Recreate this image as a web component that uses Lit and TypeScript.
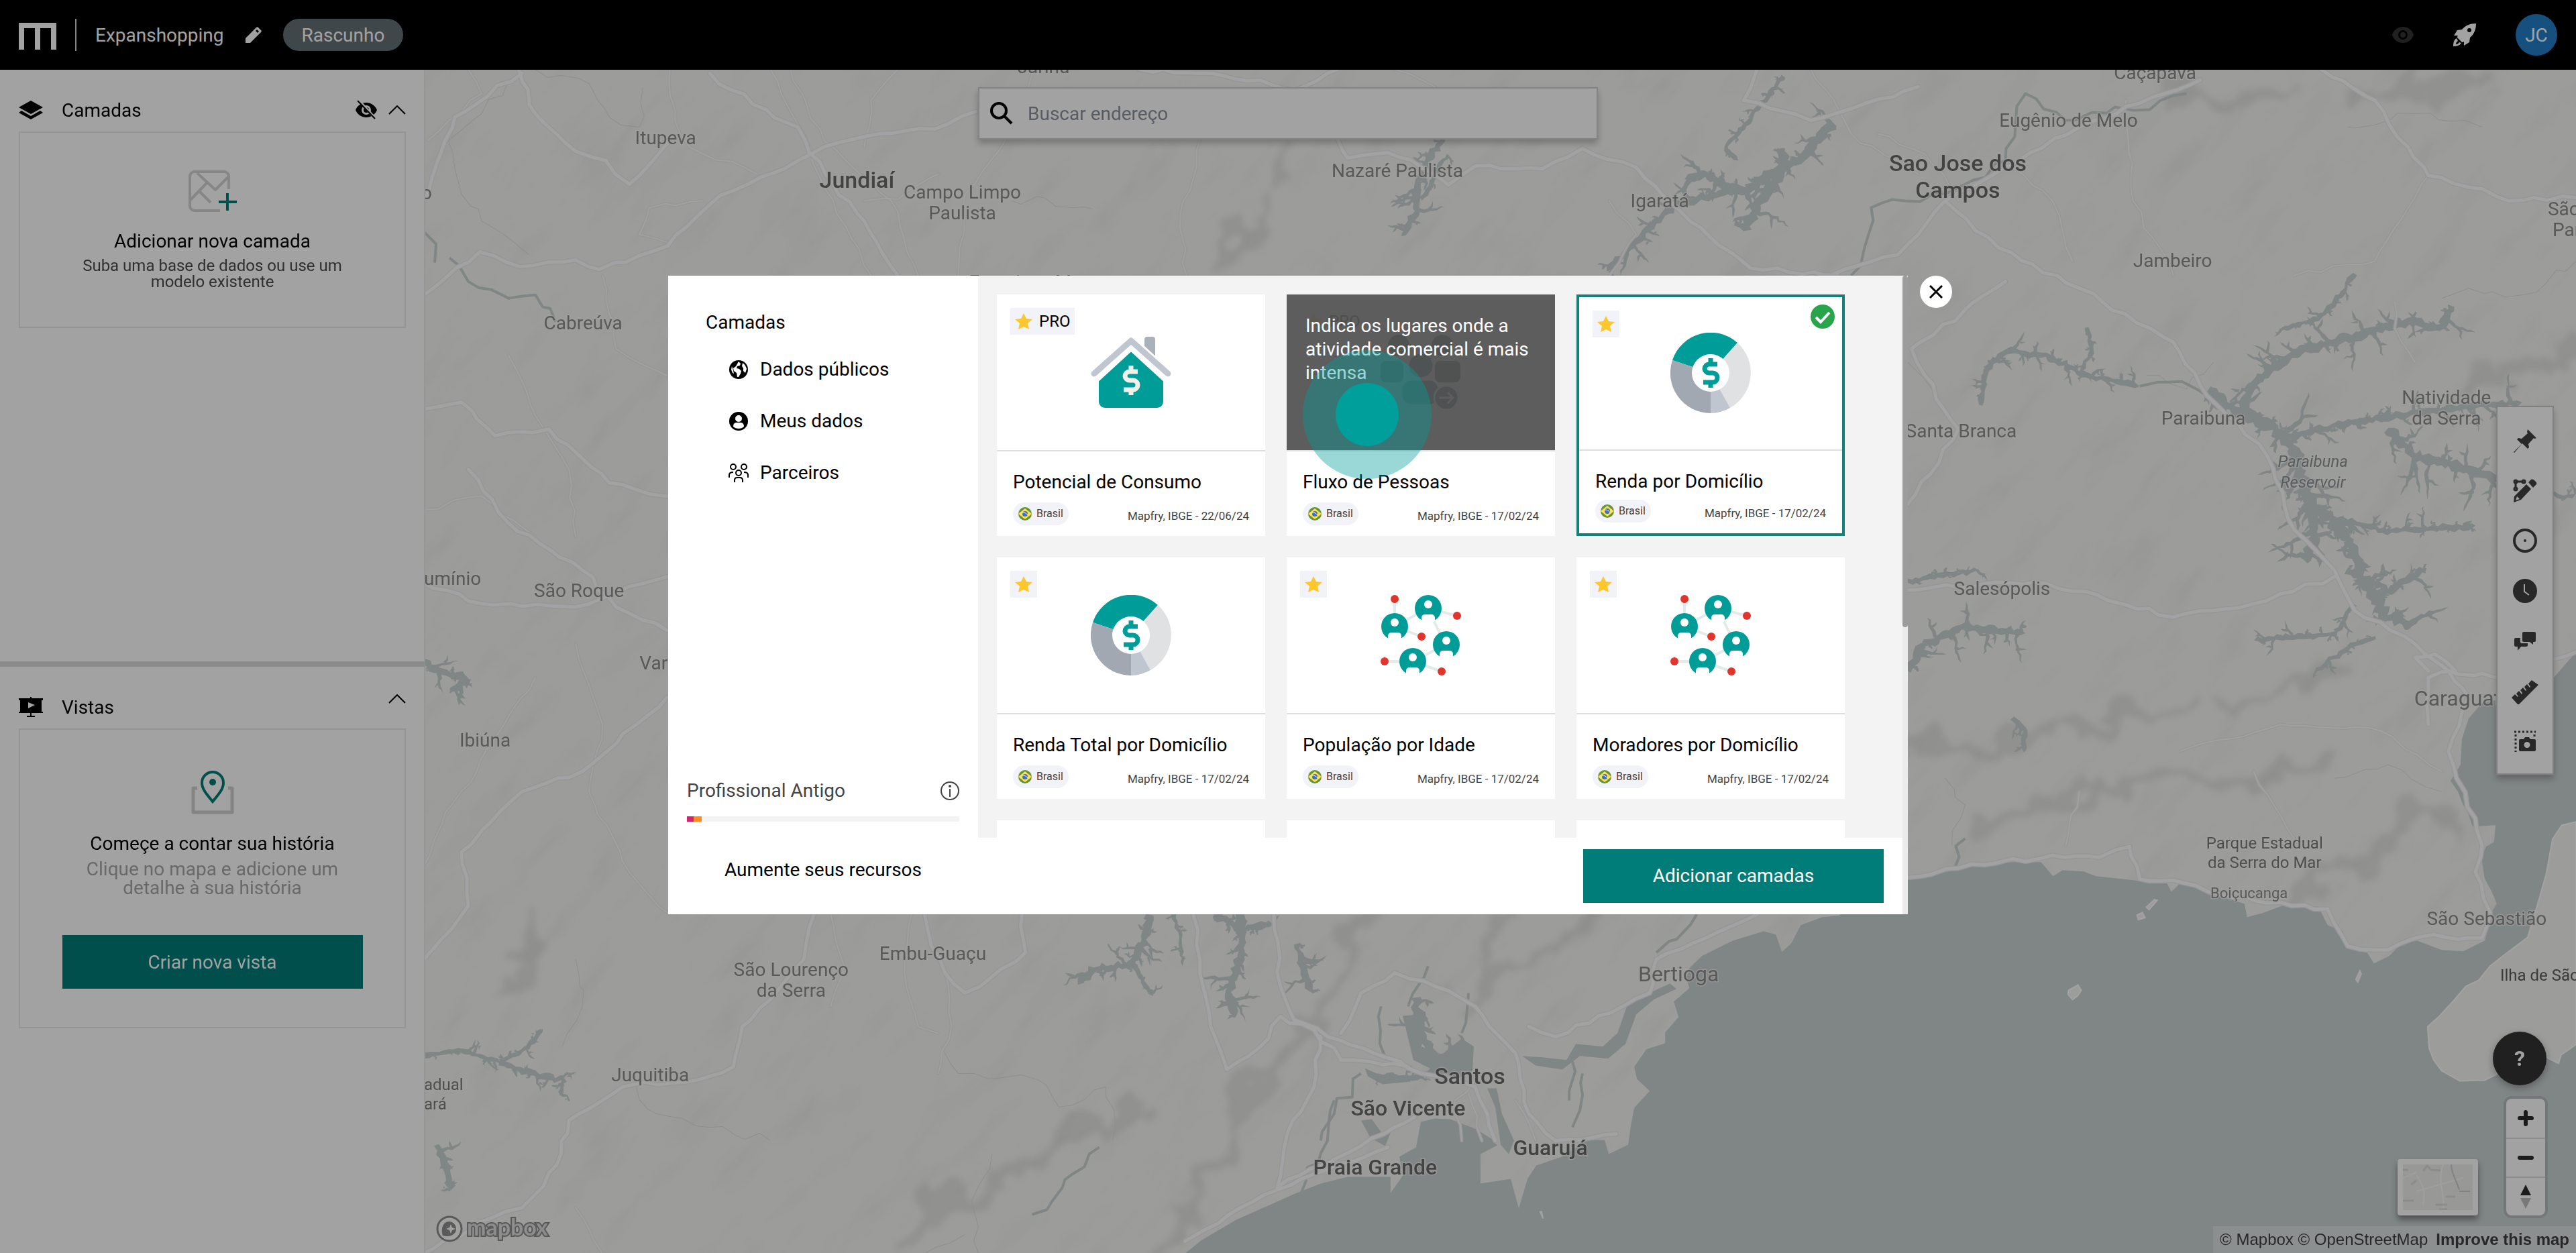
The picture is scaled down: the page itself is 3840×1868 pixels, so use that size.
import { LitElement, html, svg, css, nothing } from "lit";
import { customElement, property } from "lit/decorators.js";

type Pt = [number, number];

/* Deterministic generator, so that the shoreline detail is stable between renders. */
function rng(seed: number) {
  let s = seed * 9301 + 49297;
  return () => {
    s = (s * 1103515245 + 12345) & 0x7fffffff;
    return s / 0x7fffffff;
  };
}

/* Ragged ribbon around a spine, which narrows to a point at its far end. */
function ribbon(spine: Pt[], width: number, r: () => number, taper: boolean): string {
  const left: string[] = [];
  const right: string[] = [];
  const total = spine.length - 1;
  for (let i = 0; i < total; i++) {
    const [x1, y1] = spine[i];
    const [x2, y2] = spine[i + 1];
    const len = Math.hypot(x2 - x1, y2 - y1) || 1;
    const nx = -(y2 - y1) / len;
    const ny = (x2 - x1) / len;
    const steps = Math.max(2, Math.round(len / 6));
    for (let k = 0; k < steps; k++) {
      const t = k / steps;
      const fade = taper ? 1 - (i + t) / total : 1;
      const x = x1 + (x2 - x1) * t + (r() - 0.5) * 4;
      const y = y1 + (y2 - y1) * t + (r() - 0.5) * 4;
      const a = 1 + width * fade * (0.25 + r() * 0.75);
      const b = 1 + width * fade * (0.25 + r() * 0.75);
      left.push(`${(x + nx * a).toFixed(0)} ${(y + ny * a).toFixed(0)}`);
      right.unshift(`${(x - nx * b).toFixed(0)} ${(y - ny * b).toFixed(0)}`);
    }
  }
  const end = spine[total];
  return `M${left.join("L")}L${end[0]} ${end[1]}L${right.join("L")}Z`;
}

/* Flooded valley: a main body with tapering side arms of uneven length, each with small twigs. */
function reservoir(spine: Pt[], width: number, seed: number): string {
  const r = rng(seed);
  let d = ribbon(spine, width * 0.7, r, false);
  for (let i = 0; i < spine.length - 1; i++) {
    const [x1, y1] = spine[i];
    const [x2, y2] = spine[i + 1];
    const len = Math.hypot(x2 - x1, y2 - y1);
    const dir = Math.atan2(y2 - y1, x2 - x1);
    const arms = Math.round(len / 13);
    for (let k = 0; k < arms; k++) {
      const t = (k + r()) / arms;
      const side = r() > 0.5 ? 1 : -1;
      const angle = dir + side * (0.6 + r() * 1.2);
      const reach = width * (1 + Math.pow(r(), 2) * 3.2);
      const ox = x1 + (x2 - x1) * t;
      const oy = y1 + (y2 - y1) * t;
      const bend = angle + (r() - 0.5) * 1.2;
      const mx = ox + Math.cos(angle) * reach * 0.6;
      const my = oy + Math.sin(angle) * reach * 0.6;
      const ex = mx + Math.cos(bend) * reach * 0.6;
      const ey = my + Math.sin(bend) * reach * 0.6;
      d += ribbon([[ox, oy], [mx, my], [ex, ey]], width * 0.35, r, true);
      const twig = bend + (r() > 0.5 ? 1 : -1) * 1.1;
      d += ribbon([[mx, my], [mx + Math.cos(twig) * reach * 0.4, my + Math.sin(twig) * reach * 0.4]], width * 0.2, r, true);
    }
  }
  return d;
}

/* Winding line through the given points. */
function winding(points: Pt[], jitter: number, seed: number): string {
  const r = rng(seed);
  let d = `M${points[0][0]} ${points[0][1]}`;
  for (let i = 0; i < points.length - 1; i++) {
    const [x1, y1] = points[i];
    const [x2, y2] = points[i + 1];
    const steps = Math.max(1, Math.round(Math.hypot(x2 - x1, y2 - y1) / 20));
    for (let k = 1; k <= steps; k++) {
      const t = k / steps;
      const j = k === steps ? 0 : jitter;
      d += `L${(x1 + (x2 - x1) * t + (r() - 0.5) * j).toFixed(0)} ${(y1 + (y2 - y1) * t + (r() - 0.5) * j).toFixed(0)}`;
    }
  }
  return d;
}

const RESERVOIRS: [Pt[], number][] = [
  [[[2660, 112], [2640, 140], [2598, 191], [2571, 222], [2592, 240]], 5],
  [[[2735, 184], [2690, 232], [2640, 262], [2600, 285], [2540, 262], [2512, 268]], 12],
  [[[2600, 285], [2560, 292], [2500, 305], [2450, 350], [2396, 405]], 8],
  [[[2660, 225], [2650, 265], [2620, 305], [2600, 345]], 13],
  [[[2152, 207], [2130, 240], [2112, 283], [2112, 317], [2090, 353]], 9],
  [[[2160, 230], [2140, 262], [2120, 300]], 5],
  [[[3510, 408], [3490, 440], [3455, 475], [3400, 490]], 6],
  [[[3655, 455], [3640, 490], [3590, 480], [3520, 500], [3430, 522], [3360, 570], [3340, 620]], 11],
  [[[3290, 582], [3330, 610], [3390, 640], [3420, 670], [3440, 740], [3450, 790], [3440, 840]], 16],
  [[[3400, 655], [3460, 640], [3560, 622], [3680, 606], [3760, 600]], 9],
  [[[3440, 740], [3500, 800], [3520, 860], [3560, 920], [3600, 930]], 16],
  [[[3560, 640], [3600, 680], [3680, 700], [3730, 716]], 13],
  [[[3470, 770], [3560, 792], [3690, 784]], 7],
  [[[3500, 850], [3560, 880], [3616, 850]], 9],
  [[[3510, 900], [3480, 945], [3360, 955]], 6],
  [[[3540, 950], [3500, 966], [3450, 1002]], 5],
  [[[3790, 730], [3820, 742], [3840, 736]], 5],
  [[[2952, 604], [2962, 550], [2990, 522], [3050, 530], [3110, 560], [3190, 576]], 7],
  [[[3112, 488], [3120, 525], [3100, 556]], 5],
  [[[2844, 1000], [2866, 962], [2930, 934], [3020, 944]], 10],
  [[[2844, 866], [2890, 858], [2950, 850]], 6],
  [[[3000, 1070], [3020, 1090], [3018, 1122]], 6],
  [[[1717, 1363], [1704, 1407], [1685, 1438], [1628, 1446], [1608, 1468]], 10],
  [[[1700, 1405], [1690, 1440], [1720, 1485]], 6],
  [[[1750, 1363], [1762, 1400], [1764, 1440]], 4],
  [[[1851, 1363], [1851, 1424], [1832, 1481], [1844, 1515]], 12],
  [[[1810, 1363], [1850, 1385], [1900, 1378]], 8],
  [[[1934, 1407], [1946, 1451], [1959, 1481]], 9],
  [[[634, 1574], [690, 1566], [747, 1584], [790, 1560], [811, 1534]], 5],
  [[[747, 1584], [800, 1602], [843, 1610], [838, 1634]], 7],
  [[[652, 1707], [668, 1740], [674, 1774]], 8],
  [[[634, 988], [655, 1000], [700, 1012], [672, 1034]], 9],
  [[[2040, 1600], [2100, 1608], [2160, 1590]], 6],
  [[[2112, 1488], [2118, 1540], [2140, 1580], [2190, 1560]], 12],
];

const SEA =
  "M2844 1311L2904 1299L2951 1289L3000 1285L3043 1285L3061 1306L3075 1297L3107 1299L3125 1306L3190 1313L3231 1317L3237 1329L3249 1318L3282 1324L3323 1340L3346 1347L3350 1367L3373 1361L3405 1349L3456 1351L3470 1379L3493 1388L3497 1413L3529 1420L3539 1436L3562 1425L3578 1408L3603 1402L3640 1416L3672 1418L3704 1402L3709 1384L3714 1360L3722 1347L3714 1328L3704 1310L3699 1278L3706 1262L3718 1255L3720 1230L3686 1232L3680 1214L3672 1200L3664 1180L3653 1164L3668 1140L3670 1102L3680 1071L3700 1048L3740 1040L3807 1010L3840 972V1868H1768L1793 1848L1844 1818L1934 1778L1970 1764L2010 1754L2074 1754V1778L2093 1751L2087 1724L2112 1710L2119 1672L2140 1667L2163 1668L2202 1683L2224 1697L2233 1707L2208 1720V1764L2253 1757L2265 1801L2278 1757L2291 1737L2329 1724L2367 1699L2393 1699L2399 1720L2428 1706L2432 1677L2437 1651L2460 1626L2441 1608L2437 1590L2455 1564L2483 1555V1539L2503 1516L2496 1493L2519 1473L2515 1457L2519 1443L2538 1425L2584 1402L2630 1388L2648 1393L2657 1419L2671 1406L2685 1379L2717 1367L2741 1365Z";

const ISLANDS = [
  "M3840 1225L3819 1230L3805 1251L3796 1301L3782 1351L3768 1397L3731 1425L3712 1440L3695 1461L3676 1470L3658 1491L3635 1516L3619 1530L3621 1562L3628 1580L3640 1596L3667 1611L3704 1610L3722 1601L3760 1590L3796 1576L3814 1585L3818 1572L3840 1557Z",
  "M3084 1476L3098 1468L3103 1476L3098 1484L3090 1490L3083 1482Z",
  "M3186 1364L3194 1360L3198 1368L3188 1371Z",
  "M3200 1352L3212 1341L3216 1342L3204 1356Z",
  "M3512 1460L3518 1447L3520 1452L3515 1464Z",
  "M2297 1806L2301 1816L2299 1806Z",
];

/* Estuary channels round Santos, Guarujá and Bertioga. */
const CHANNELS = [
  "M2092 1514L2124 1512L2120 1560L2150 1572L2180 1548L2198 1560L2196 1596L2176 1606L2140 1596L2108 1580Z",
  "M2036 1592L2062 1604L2100 1602L2104 1612L2062 1616L2040 1604Z",
  "M2232 1622L2240 1660L2258 1700L2250 1720L2238 1706L2230 1650L2218 1622Z",
  "M2030 1670L2046 1668L2062 1690L2074 1688L2066 1708L2044 1696Z",
  "M2270 1574L2300 1576L2336 1580L2350 1556L2390 1560L2412 1540L2426 1500L2460 1480L2490 1466L2500 1474L2466 1490L2440 1512L2424 1556L2398 1578L2356 1574L2330 1594L2290 1588Z",
];

const ROADS_MAIN: Pt[][] = [
  [[634, 440], [717, 376], [777, 398], [860, 388], [895, 402], [997, 367], [1058, 307], [1099, 283], [1191, 240], [1252, 213], [1313, 200], [1395, 193], [1456, 167]],
  [[634, 300], [680, 175], [780, 110]],
  [[1060, 110], [1124, 156], [1191, 190], [1232, 260], [1290, 330], [1340, 411]],
  [[775, 104], [800, 170], [860, 226], [905, 240], [940, 275], [975, 240], [1000, 210]],
  [[1700, 104], [1790, 110], [1880, 120], [1930, 135], [1995, 104]],
  [[1995, 207], [2010, 236], [2070, 228], [2120, 250], [2160, 276], [2200, 248], [2300, 252], [2360, 222], [2440, 250], [2520, 330], [2610, 400], [2740, 411]],
  [[3460, 104], [3540, 150], [3590, 220], [3620, 262], [3700, 282], [3740, 300], [3840, 295]],
  [[3280, 120], [3100, 190], [2990, 250], [2900, 300], [2830, 380], [2730, 411]],
  [[2900, 300], [2980, 370], [3100, 430], [3240, 510], [3290, 590], [3380, 680], [3420, 790], [3480, 850], [3510, 910], [3600, 960], [3650, 1000], [3680, 1040], [3650, 1120], [3662, 1160], [3690, 1220], [3700, 1260], [3690, 1300], [3712, 1360], [3700, 1398], [3610, 1396], [3560, 1416], [3500, 1410], [3470, 1355], [3400, 1345], [3330, 1338], [3240, 1312], [3190, 1310], [3175, 1262], [3130, 1278], [3060, 1275], [3040, 1280], [2940, 1288], [2844, 1308]],
  [[3650, 1000], [3720, 1010], [3840, 972]],
  [[2620, 104], [2600, 150], [2700, 180], [2860, 130]],
  [[634, 1868], [735, 1815], [780, 1800], [800, 1780], [838, 1720], [850, 1670], [930, 1620], [1040, 1610], [1095, 1590], [1108, 1530], [1150, 1490], [1200, 1430], [1215, 1363]],
  [[1380, 1363], [1390, 1410], [1410, 1450], [1440, 1480], [1480, 1456], [1530, 1420], [1525, 1363]],
  [[1780, 1363], [1790, 1430], [1806, 1530], [1830, 1594], [1880, 1560], [1910, 1515], [1960, 1535], [2000, 1580], [2100, 1590]],
  [[1900, 1363], [1910, 1470], [1930, 1520], [1980, 1545], [2050, 1570], [2120, 1600], [2200, 1620], [2230, 1700]],
  [[2000, 1540], [2030, 1480], [2080, 1450], [2140, 1470], [2200, 1500], [2260, 1570], [2280, 1660], [2320, 1700], [2410, 1690]],
  [[2280, 1530], [2320, 1545], [2370, 1525], [2420, 1500], [2460, 1480], [2470, 1430], [2560, 1390], [2620, 1363]],
  [[1970, 1545], [1960, 1620], [1920, 1690], [1905, 1770], [2080, 1680], [2110, 1665]],
  [[1768, 1850], [1850, 1800], [1960, 1750], [2070, 1710]],
  [[2844, 752], [2920, 640], [2870, 560], [2850, 520], [2990, 420]],
  [[2844, 880], [2960, 870], [3050, 870], [3240, 920], [3360, 900], [3480, 860]],
  [[634, 610], [690, 600], [740, 650], [820, 640], [910, 720], [996, 740]],
  [[634, 870], [720, 900], [860, 905], [960, 870], [996, 860]],
  [[634, 1430], [660, 1400], [700, 1350], [690, 1270], [780, 1180], [870, 1150], [996, 1040]],
  [[700, 700], [760, 780], [870, 850], [920, 905], [996, 940]],
  [[3620, 1000], [3600, 980], [3630, 975], [3660, 1000], [3620, 1010], [3620, 1080]],
];

const ROADS_MINOR: Pt[][] = [
  [[700, 104], [720, 140], [640, 210]], [[1000, 104], [1008, 180], [1030, 220], [1130, 260]],
  [[1150, 104], [1200, 200], [1230, 280], [1300, 411]], [[1180, 104], [1230, 210], [1330, 300], [1370, 411]],
  [[1340, 104], [1300, 150], [1290, 220]], [[1540, 110], [1500, 210], [1440, 290], [1430, 411]],
  [[1790, 207], [1760, 340], [1770, 411]], [[2080, 104], [2140, 130]],
  [[1290, 300], [1340, 298], [1400, 260]], [[1050, 300], [970, 310], [955, 350], [998, 362]],
  [[2700, 104], [2760, 200], [2860, 260]], [[3000, 250], [3060, 300], [3090, 390]], [[3170, 150], [3180, 300], [3240, 411]],
  [[2920, 300], [2870, 230], [2800, 200]], [[2400, 411], [2440, 350], [2400, 300]],
  [[3620, 262], [3590, 310], [3540, 390], [3500, 395], [3420, 411]], [[3570, 450], [3570, 490], [3600, 540]],
  [[1240, 1363], [1260, 1440], [1240, 1500]], [[1410, 1450], [1420, 1530], [1400, 1600]], [[1360, 1363], [1350, 1450], [1370, 1530], [1400, 1540]],
  [[2180, 1700], [2170, 1640], [2200, 1610]], [[2210, 1700], [2190, 1630]], [[2290, 1700], [2260, 1640]],
  [[900, 1868], [860, 1800]], [[634, 1290], [660, 1230], [740, 1100], [800, 1010]], [[760, 530], [800, 620], [850, 700], [860, 800]],
  [[634, 760], [720, 740], [800, 800]], [[900, 411], [920, 520], [996, 560]], [[860, 960], [900, 1080], [880, 1180], [940, 1300], [1000, 1363]],
  [[3100, 1180], [3080, 1260]], [[3360, 1150], [3420, 1250]], [[3640, 1150], [3550, 1090], [3400, 1080], [3250, 1120]],
];

const STREAMS: Pt[][] = [
  [[800, 104], [880, 125], [893, 150], [910, 175], [955, 190], [960, 130]],
  [[760, 120], [720, 170], [670, 210], [690, 290], [720, 330], [790, 380]],
  [[1510, 300], [1560, 296], [1600, 310], [1630, 312]],
  [[860, 1430], [870, 1500], [840, 1560]], [[950, 1620], [980, 1660], [1060, 1680], [1150, 1700]],
  [[1405, 1560], [1430, 1600], [1550, 1610], [1580, 1650], [1650, 1620], [1660, 1700]],
  [[3500, 190], [3600, 170], [3700, 190]], [[3840, 390], [3760, 440], [3680, 430], [3640, 445]],
  [[2844, 540], [2880, 580], [2900, 620]], [[3300, 540], [3260, 580], [3200, 560]],
  [[1480, 1720], [1450, 1790], [1460, 1868]], [[1440, 1840], [1380, 1868]],
  [[2900, 1160], [2930, 1200], [2910, 1260]], [[3480, 1160], [3560, 1140], [3640, 1180]],
];

const RIVERS: Pt[][] = [
  [[3260, 140], [3180, 165], [3080, 180], [3020, 140], [2990, 240], [2900, 290], [2840, 300], [2790, 310], [2780, 370], [2760, 411]],
  [[3190, 576], [3230, 570], [3290, 590]],
  [[1640, 1710], [1600, 1750], [1570, 1790], [1540, 1810]],
  [[2530, 1363], [2500, 1400], [2470, 1420]],
  [[1990, 1640], [1980, 1700], [1950, 1740], [1940, 1780]],
  [[2130, 1440], [2100, 1500]], [[2350, 1560], [2340, 1640]], [[2190, 1480], [2180, 1540]],
  [[2060, 1500], [2068, 1580]], [[2360, 1600], [2345, 1680]],
  [[2930, 1250], [2912, 1300]], [[672, 385], [700, 420], [760, 445], [800, 440], [830, 480]],
  [[634, 346], [652, 364], [650, 392]], [[2030, 1600], [1990, 1660], [1970, 1700]],
];

const RIDGES = [
  "M1740 1868C1820 1760 1800 1700 1880 1620C1920 1560 1960 1500 2020 1420L2060 1363",
  "M1340 1868C1360 1800 1420 1780 1500 1760C1560 1700 1640 1700 1700 1640",
  "M2180 1500C2260 1430 2320 1440 2380 1363",
  "M2200 1460C2240 1400 2220 1380 2260 1363",
  "M2844 1120C2900 1080 2960 1110 3040 1090C3120 1060 3180 1100 3260 1050",
  "M2960 1230C3060 1180 3160 1200 3240 1150C3320 1200 3400 1180 3480 1130",
  "M3420 1340C3480 1290 3540 1280 3600 1200C3640 1180 3650 1240 3680 1260",
  "M3300 1040C3380 1010 3440 1030 3500 1000",
  "M3640 600C3720 560 3760 560 3838 510", "M3500 150C3580 130 3620 150 3700 130",
  "M3700 1560C3720 1520 3740 1560 3780 1500C3800 1480 3820 1540 3838 1500",
  "M1880 320C1850 360 1820 380 1810 411", "M1920 220C1910 260 1900 260 1890 290",
  "M760 1490C780 1440 800 1420 810 1363",
  "M3240 150C3300 130 3330 160 3400 140",
];

interface Place {
  lines: string[];
  x: number;
  y: number;
  kind?: string;
  start?: boolean;
}

const PLACES: Place[] = [
  { lines: ["Jarinu"], x: 1557, y: 110 },
  { lines: ["Itupeva"], x: 994, y: 215 },
  { lines: ["Jundiaí"], x: 1279, y: 280, kind: "city" },
  { lines: ["Campo Limpo", "Paulista"], x: 1436, y: 296 },
  { lines: ["Nazaré Paulista"], x: 2084, y: 264 },
  { lines: ["Francisco Morato"], x: 1446, y: 430, start: true },
  { lines: ["Caçapava"], x: 3213, y: 119 },
  { lines: ["Eugênio de Melo"], x: 3084, y: 190 },
  { lines: ["Sao Jose dos", "Campos"], x: 2919, y: 255, kind: "city" },
  { lines: ["Igaratá"], x: 2475, y: 309 },
  { lines: ["Jambeiro"], x: 3239, y: 398 },
  { lines: ["São Luís"], x: 3798, y: 321, start: true },
  { lines: ["Paraitinga"], x: 3805, y: 352, start: true },
  { lines: ["Natividade", "da Serra"], x: 3647, y: 602 },
  { lines: ["Paraibuna"], x: 3285, y: 633 },
  { lines: ["Paraibuna", "Reservoir"], x: 3448, y: 696, kind: "water" },
  { lines: ["Santa Branca"], x: 2924, y: 652 },
  { lines: ["Salesópolis"], x: 2985, y: 887 },
  { lines: ["Caraguat"], x: 3599, y: 1052, kind: "large", start: true },
  { lines: ["Parque Estadual", "da Serra do Mar"], x: 3376, y: 1265, kind: "park" },
  { lines: ["Boiçucanga"], x: 3353, y: 1339, kind: "small" },
  { lines: ["São Sebastião"], x: 3707, y: 1379 },
  { lines: ["Ilha de São"], x: 3727, y: 1462, kind: "isle", start: true },
  { lines: ["Bertioga"], x: 2503, y: 1463, kind: "large" },
  { lines: ["Santos"], x: 2192, y: 1616, kind: "city" },
  { lines: ["São Vicente"], x: 2100, y: 1663, kind: "town" },
  { lines: ["Guarujá"], x: 2312, y: 1722, kind: "town" },
  { lines: ["Praia Grande"], x: 2051, y: 1751, kind: "town" },
  { lines: ["Embu-Guaçu"], x: 1392, y: 1431 },
  { lines: ["São Lourenço", "da Serra"], x: 1181, y: 1455 },
  { lines: ["Juquitiba"], x: 971, y: 1612 },
  { lines: ["adual", "ará"], x: 634, y: 1625, kind: "park", start: true },
  { lines: ["Ibiúna"], x: 725, y: 1113 },
  { lines: ["São Roque"], x: 865, y: 890 },
  { lines: ["umínio"], x: 634, y: 872, start: true },
  { lines: ["Cabreúva"], x: 871, y: 491 },
  { lines: ["Vargem"], x: 955, y: 998, start: true },
  { lines: ["o"], x: 630, y: 297, start: true },
];

const LEADING: Record<string, number> = { city: 40, park: 29 };

@customElement("map-canvas")
export class MapCanvas extends LitElement {
  static styles = css`
    :host { display: block; background: #f6f6f4; overflow: hidden; }
    svg { display: block; width: 100%; height: 100%; }
    .water { fill: #cad2d3; }
    .land { fill: #f6f6f4; stroke: #ffffff; stroke-width: 2; }
    .road { fill: none; stroke-linejoin: round; stroke-linecap: round; }
    .casing { stroke: #ededf0; stroke-width: 8; }
    .main { stroke: #ffffff; stroke-width: 5; }
    .minor-casing { stroke: #eeeef0; stroke-width: 5; }
    .minor { stroke: #fdfdfd; stroke-width: 2; }
    .stream { fill: none; stroke: #dfe0de; stroke-width: 1; }
    .river { fill: none; stroke: #cad2d3; stroke-width: 4; stroke-linejoin: round; }
    .ridge { fill: none; stroke: #d6d6d2; stroke-width: 22; stroke-linecap: round; opacity: 0.55; }
    text {
      font-family: Roboto, "Liberation Sans", sans-serif; font-size: 28px; fill: #8c8c8c;
      paint-order: stroke; stroke: #f6f6f4; stroke-width: 3px; stroke-opacity: 0.7; text-anchor: middle;
    }
    .start { text-anchor: start; }
    .city { font-size: 34px; font-weight: 500; fill: #6a6a6a; }
    .town { font-size: 32px; fill: #6a6a6a; font-weight: 500; }
    .large { font-size: 32px; }
    .small { font-size: 22px; }
    .park { font-size: 24px; fill: #7c7c7c; }
    .isle { font-size: 24px; fill: #5c5c5c; }
    .water-name { font-size: 24px; font-style: italic; fill: #8a9396; }
  `;

  render() {
    return html`
      <svg viewBox="634 104 3206 1764" preserveAspectRatio="xMidYMid slice" role="img" aria-label="Mapa">
        <defs>
          <filter id="soft" x="-20%" y="-20%" width="140%" height="140%">
            <feTurbulence type="fractalNoise" baseFrequency="0.014" numOctaves="3" seed="5" result="n" />
            <feDisplacementMap in="SourceGraphic" in2="n" scale="110" xChannelSelector="R" yChannelSelector="G" />
            <feGaussianBlur stdDeviation="5" />
          </filter>
          <filter id="relief" x="0" y="0" width="100%" height="100%">
            <feTurbulence type="fractalNoise" baseFrequency="0.008 0.022" numOctaves="4" seed="11" />
            <feColorMatrix values="0 0 0 0 0.45  0 0 0 0 0.45  0 0 0 0 0.42  3 0 0 0 -1.6" />
          </filter>
        </defs>
        <g transform="rotate(-50 2237 986)"><rect x="0" y="-1200" width="4480" height="4400" filter="url(#relief)" opacity="0.11" /></g>
        <g filter="url(#soft)">${RIDGES.map((d) => svg`<path class="ridge" d=${d} />`)}</g>
        ${STREAMS.map((p, i) => svg`<path class="stream" d=${winding(p, 14, i + 3)} />`)}
        ${RIVERS.map((p, i) => svg`<path class="river" d=${winding(p, 16, i + 41)} />`)}
        <path class="water" d=${SEA} />
        ${CHANNELS.map((d) => svg`<path class="water" d=${d} />`)}
        ${ISLANDS.map((d) => svg`<path class="land" d=${d} />`)}
        ${RESERVOIRS.map(([p, w], i) => svg`<path class="water" d=${reservoir(p, w, i + 7)} />`)}
        ${ROADS_MINOR.map((p, i) => svg`<path class="road minor-casing" d=${winding(p, 8, i + 90)} />`)}
        ${ROADS_MINOR.map((p, i) => svg`<path class="road minor" d=${winding(p, 8, i + 90)} />`)}
        ${ROADS_MAIN.map((p, i) => svg`<path class="road casing" d=${winding(p, 7, i + 60)} />`)}
        ${ROADS_MAIN.map((p, i) => svg`<path class="road main" d=${winding(p, 7, i + 60)} />`)}
        ${PLACES.map((p) => {
          const kind = p.kind === "water" ? "water-name" : p.kind ?? "";
          return p.lines.map(
            (line, i) => svg`<text class="${kind} ${p.start ? "start" : ""}" x=${p.x} y=${p.y + i * (LEADING[p.kind ?? ""] ?? 31)}>${line}</text>`,
          );
        })}
      </svg>
    `;
  }
}

const icon = (name: string) => {
  switch (name) {
    case "logo":
      return html`<svg viewBox="0 0 56 40" width="56" height="40"><path fill="#fff" d="M0 0h56v40h-8V8H32v32h-8V8H8v32H0z" /></svg>`;
    case "pencil":
      return html`<svg viewBox="0 0 24 24" width="24" height="24"><path fill="#fff" fill-rule="evenodd" d="M0 24v-7L16 1c1-1 2-1 3 0l4 4c1 1 1 2 0 3L7 24zM17 4l-2 2 3 3 2-2z" /></svg>`;
    case "eye":
      return html`<svg viewBox="0 0 32 24" width="32" height="24"><path fill="#333" fill-rule="evenodd" d="M16 0C8 0 2 5 0 12c2 7 8 12 16 12s14-5 16-12C30 5 24 0 16 0zm0 5a7 7 0 1 1 0 14 7 7 0 0 1 0-14z" /><circle cx="16" cy="12" r="4" fill="#333" /></svg>`;
    case "rocket":
      return html`<svg viewBox="0 0 34 34" width="34" height="34"><path fill="#fff" fill-rule="evenodd" d="M34 0c-9 0-16 3-21 9l-7 1-5 8 6 0c-1 1-1 2-1 3l7 7c1 0 2 0 3-1l0 6 8-5 1-7c6-5 9-12 9-21zM24 7a3 3 0 1 1 0 6 3 3 0 0 1 0-6z" /><path fill="#fff" d="M5 22c-4 2-5 7-5 12 5 0 10-1 12-5l-3-1c-1 2-3 3-5 3 0-2 1-4 3-5z" /></svg>`;
    case "layers":
      return html`<svg viewBox="0 0 36 28" width="36" height="28"><path d="M18 0l18 10-18 10L0 10z" /><path d="M4 15l14 8 14-8 4 3-18 10L0 18z" /></svg>`;
    case "eye-off":
      return html`<svg viewBox="0 0 32 28" width="32" height="28"><path fill-rule="evenodd" d="M16 3C9 3 3 7 0 14c3 7 9 11 16 11s13-4 16-11C29 7 23 3 16 3zm0 4a7 7 0 1 1 0 14 7 7 0 0 1 0-14z" /><circle cx="16" cy="14" r="4" /><path d="M5 0l25 27" stroke="#fff" stroke-width="4" /><path d="M3 0l26 27" stroke="#000" stroke-width="2" /></svg>`;
    case "chevron":
      return html`<svg viewBox="0 0 26 14" width="26" height="14"><path fill="none" stroke="#000" stroke-width="2" d="M1 13L13 1l12 12" /></svg>`;
    case "add-layer":
      return html`<svg viewBox="0 0 72 62" width="72" height="62"><g fill="none" stroke="#d4d4d4" stroke-width="4" stroke-linejoin="round"><path d="M60 28V9a7 7 0 0 0-7-7H9a7 7 0 0 0-7 7v44a7 7 0 0 0 7 7h38M2 45L28 18M13 4l27 25 19-19M16 31l17 17" /></g><path d="M45 47h27M58 34v26" stroke="#007d75" stroke-width="4" /></svg>`;
    case "presentation":
      return html`<svg viewBox="0 0 36 30" width="36" height="30"><path fill-rule="evenodd" d="M17 0h2v2h17v3h-2v17h2v2H19v4h5v2H12v-2h5v-4H0v-2h2V5H0V2h17zm-3 8v9l10-5z" /></svg>`;
    case "pin-tray":
      return html`<svg viewBox="0 0 64 66" width="64" height="66"><path fill="none" stroke="#d0d0d0" stroke-width="5" stroke-linejoin="round" d="M9 27H3v36h58V27h-6" /><path fill="none" stroke="#007d75" stroke-width="4" d="M32 47C24 37 16 29 16 19a16 16 0 0 1 32 0c0 10-8 18-16 28z" /><circle cx="32" cy="18" r="5" fill="#007d75" /></svg>`;
    case "search":
      return html`<svg viewBox="0 0 34 34" width="34" height="34"><circle cx="13" cy="13" r="11" fill="none" stroke="#000" stroke-width="4" /><path d="M20 20l12 12" stroke="#000" stroke-width="4" /></svg>`;
    case "close":
      return html`<svg viewBox="0 0 20 20" width="20" height="20"><path d="M1 1l18 18M19 1L1 19" stroke="#000" stroke-width="3" /></svg>`;
    case "globe":
      return html`<svg viewBox="0 0 28 28" width="28" height="28"><circle cx="14" cy="14" r="14" /><path fill="#fff" d="M14 2l3 3-1 3-4 1-1 3 4 1 3 3-1 4-3 5-2 0-1-6-4-3-1-4 4-3zM20 4c3 2 5 5 6 9l-2 6-3-3 0-4-2-3zM4 9l-1 5 2 5 2 1-1-5z" /></svg>`;
    case "user":
      return html`<svg viewBox="0 0 28 28" width="28" height="28"><circle cx="14" cy="14" r="14" /><circle cx="14" cy="10" r="5" fill="#fff" /><path fill="#fff" d="M6 22c0-4 2-6 5-6h6c3 0 5 2 5 6-4 4-12 4-16 0z" /></svg>`;
    case "group":
      return html`<svg viewBox="0 0 30 28" width="30" height="28"><g fill="none" stroke="#000" stroke-width="2"><circle cx="7" cy="5" r="4" /><circle cx="23" cy="5" r="4" /><circle cx="15" cy="14" r="4" /><path d="M1 21v-4c0-3 2-4 6-4M29 21v-4c0-3-2-4-6-4M9 28v-3c0-3 2-4 4-4h4c2 0 4 1 4 4v3" /></g></svg>`;
    case "info":
      return html`<svg viewBox="0 0 28 28" width="28" height="28"><circle cx="14" cy="14" r="13" fill="none" stroke="#444" stroke-width="2" /><path d="M14 11v12" stroke="#444" stroke-width="2" /><circle cx="14" cy="7" r="2" fill="#444" /></svg>`;
    case "star":
      return html`<svg viewBox="0 0 26 24" width="26" height="24"><path fill="#ffc72e" d="M13 0l4 8 9 1-7 6 2 9-8-4-8 4 2-9-7-6 9-1z" /></svg>`;
    case "flag":
      return html`<svg viewBox="0 0 20 20" width="20" height="20"><circle cx="10" cy="10" r="10" fill="#699635" /><path fill="#ffe15a" d="M0 10l10-8 10 8-10 8z" /><circle cx="10" cy="10" r="4" fill="#4172b8" /><path d="M6 8c4 0 6 1 8 4" fill="none" stroke="#fff" stroke-width="1" /></svg>`;
    case "check":
      return html`<svg viewBox="0 0 36 36" width="36" height="36"><circle cx="18" cy="18" r="18" fill="#28a44a" /><path fill="none" stroke="#fff" stroke-width="4" d="M8 19l7 7L28 12" /></svg>`;
    case "tool-pin":
      return html`<svg viewBox="0 0 36 36" width="36" height="36"><path d="M22 1l13 13-3 1-1-1-8 9 1 5-2 2-8-8L2 36l-1-1 12-12-7-7 2-2 5 1 9-8-1-2z" /></svg>`;
    case "tool-draw":
      return html`<svg viewBox="0 0 36 36" width="36" height="36"><g fill="none" stroke="#3f3f3f" stroke-width="3"><circle cx="4" cy="4" r="2" /><circle cx="16" cy="4" r="2" /><circle cx="4" cy="15" r="2" /><path d="M6 4h8M4 6v7" /></g><path fill-rule="evenodd" d="M20 8l7 7-15 16-11 4 1-9zM6 26l-2 6 6-2z" /><path d="M23 5l4-4c2-2 10 4 8 7l-5 5z" /></svg>`;
    case "tool-radius":
      return html`<svg viewBox="0 0 36 36" width="36" height="36"><circle cx="18" cy="18" r="16" fill="none" stroke="#3f3f3f" stroke-width="4" /><circle cx="18" cy="18" r="2" /></svg>`;
    case "tool-clock":
      return html`<svg viewBox="0 0 36 36" width="36" height="36"><circle cx="18" cy="18" r="18" /><path fill="none" stroke="#fff" stroke-width="2" d="M17 8v11l7 5" /></svg>`;
    case "tool-chat":
      return html`<svg viewBox="0 0 32 28" width="32" height="28"><path d="M14 0h16a2 2 0 0 1 2 2v11a2 2 0 0 1-2 2h-2v4l-5-4h-9a2 2 0 0 1-2-2V2a2 2 0 0 1 2-2z" /><path d="M9 9H2a2 2 0 0 0-2 2v9a2 2 0 0 0 2 2h3v6l5-6h8a2 2 0 0 0 2-2v-3h-9a2 2 0 0 1-2-2z" /></svg>`;
    case "tool-ruler":
      return html`<svg viewBox="0 0 40 40" width="40" height="40"><path d="M0 30l5-5 4 4 1-1-3-4 4-4 4 5 1-2-3-4 4-4 4 5 1-1-3-5 4-4 4 5 1-1-3-5 5-5 10 7-30 30z" /></svg>`;
    case "tool-camera":
      return html`<svg viewBox="0 0 32 32" width="32" height="32"><path fill="none" stroke="#3f3f3f" stroke-width="3" stroke-dasharray="3 3" d="M0 2h32M2 6v26M30 6v4" /><path fill-rule="evenodd" d="M9 13h5l2-3h6l2 3h6a2 2 0 0 1 2 2v14a2 2 0 0 1-2 2H9a2 2 0 0 1-2-2V15a2 2 0 0 1 2-2zm10 4a4 4 0 1 0 0 9 4 4 0 0 0 0-9z" /></svg>`;
    case "plus":
      return html`<svg viewBox="0 0 24 24" width="24" height="24"><path d="M3 12h18M12 3v18" stroke="#2b2b2b" stroke-width="6" stroke-linecap="round" /></svg>`;
    case "minus":
      return html`<svg viewBox="0 0 24 24" width="24" height="24"><path d="M3 12h18" stroke="#2b2b2b" stroke-width="6" stroke-linecap="round" /></svg>`;
    case "compass":
      return html`<svg viewBox="0 0 16 36" width="16" height="36"><path d="M8 0l8 16H0z" fill="#2b2b2b" /><path d="M8 36l8-16H0z" fill="#bdbdbd" /></svg>`;
    default:
      return nothing;
  }
};

const person = (x: number, y: number) => svg`
  <circle cx=${x} cy=${y} r="20" fill="#009d98" />
  <circle cx=${x} cy=${y - 6} r="6" fill="#fff" />
  <path fill="#fff" d="M${x - 10} ${y + 20}v-6a5 5 0 0 1 5-5h10a5 5 0 0 1 5 5v6z" />`;

const dollar = (color: string) => svg`
  <path fill="none" stroke=${color} stroke-width="7" d="M74 49H62a7 7 0 0 0-7 7 7 7 0 0 0 7 6h5a7 7 0 0 1 7 7 7 7 0 0 1-7 7H53" transform="translate(-4 -2)" />
  <path stroke=${color} stroke-width="7" d="M60 38v9M60 74v8" />`;

const art = (name: string) => {
  switch (name) {
    case "house":
      return html`<svg viewBox="0 0 120 120" width="120" height="120">
        <rect x="80" y="7" width="16" height="34" rx="4" fill="#aab1ba" />
        <path fill="#009d98" d="M60 24l48 45v35a9 9 0 0 1-9 9H21a9 9 0 0 1-9-9V69z" />
        <path fill="none" stroke="#fff" stroke-width="20" d="M0 71L60 16l60 55" />
        <path fill="none" stroke="#bfc6d0" stroke-width="9" stroke-linecap="round" stroke-linejoin="round" d="M5 62L60 13l55 49" />
        <g transform="translate(0 12)">${dollar("#f1f1ec")}</g>
      </svg>`;
    case "donut":
      return html`<svg viewBox="0 0 120 120" width="120" height="120">
        <path fill="#009d98" d="M60 60L3 41A60 60 0 0 1 100 15z" />
        <path fill="#e0e1e2" d="M60 60l40-45a60 60 0 0 1-11 97z" />
        <path fill="#bfc6d0" d="M60 60l29 52a60 60 0 0 1-29 8z" />
        <path fill="#a1a8b2" d="M60 60v60A60 60 0 0 1 3 41z" />
        <circle cx="60" cy="60" r="28" fill="#fff" />
        ${dollar("#009d98")}
      </svg>`;
    case "network":
      return html`<svg viewBox="0 0 120 120" width="120" height="120">
        <path fill="none" stroke="#e3ebea" stroke-width="4" d="M21 6v30M70 20L21 47l40 15M70 20l44 11M70 20l27 54-49 25H6M48 99l43 15" />
        ${person(71, 20)}${person(21, 47)}${person(98, 74)}${person(48, 99)}
        ${[[21, 6], [114, 31], [61, 62], [6, 99], [91, 114]].map(([x, y]) => svg`<circle cx=${x} cy=${y} r="6" fill="#e0342c" />`)}
      </svg>`;
    case "crowd":
      return html`<svg viewBox="0 0 120 120" width="120" height="120">
        <g fill="#2b3036"><circle cx="27" cy="20" r="16" /><circle cx="92" cy="20" r="16" /><rect x="0" y="43" width="34" height="32" rx="8" /><rect x="81" y="43" width="38" height="32" rx="8" /></g>
        <g fill="#00605e" stroke="#fff" stroke-width="3"><circle cx="60" cy="50" r="19" /><rect x="31" y="71" width="56" height="38" rx="14" /></g>
        <circle cx="98" cy="98" r="18" fill="#004846" stroke="#fff" stroke-width="3" /><path d="M87 98h20M100 90l8 8-8 8" fill="none" stroke="#fff" stroke-width="3" />
      </svg>`;
    default:
      return nothing;
  }
};

@customElement("layer-card")
export class LayerCard extends LitElement {
  @property() name = "";
  @property() art = "";
  @property() date = "";
  @property() description = "";
  @property({ type: Boolean }) pro = false;
  @property({ type: Boolean, reflect: true }) selected = false;

  static styles = css`
    :host { display: flex; flex-direction: column; box-sizing: border-box; height: 360px; background: #fff; }
    :host([selected]) { border: 4px solid #14807a; }
    .media { position: relative; flex: 0 0 65%; box-sizing: border-box; border-bottom: 2px solid #dedede; display: grid; place-items: center; }
    .badge { position: absolute; top: 20px; left: 20px; height: 40px; padding: 0 7px; display: flex; align-items: center; gap: 10px; background: #f2f3f8; font-size: 24px; }
    .check { position: absolute; top: 11px; right: 11px; height: 36px; }
    .veil { position: absolute; inset: 0; box-sizing: border-box; padding: 29px 20px 0 28px; background: rgba(83, 83, 83, 0.94); color: #fff; font-size: 28px; line-height: 35px; }
    .info { flex: 1; display: flex; flex-direction: column; justify-content: space-between; padding: 28px 24px 16px; }
    h3 { margin: 0; font-size: 28px; line-height: 36px; font-weight: 400; }
    .foot { display: flex; align-items: center; justify-content: space-between; font-size: 16px; color: #444; }
    .country { display: flex; align-items: center; gap: 7px; height: 34px; padding: 0 8px; border-radius: 17px; background: #f2f3f8; }
    .source { padding-top: 6px; font-size: 17px; }
    svg { display: block; }
  `;

  render() {
    return html`
      <div class="media">
        <span class="badge">${icon("star")}${this.pro ? "PRO" : nothing}</span>
        ${art(this.art)}
        ${this.selected ? html`<span class="check">${icon("check")}</span>` : nothing}
        ${this.description ? html`<div class="veil">${this.description}</div>` : nothing}
      </div>
      <div class="info">
        <h3>${this.name}</h3>
        <div class="foot">
          <span class="country">${icon("flag")}Brasil</span>
          <span class="source">Mapfry, IBGE - ${this.date}</span>
        </div>
      </div>
    `;
  }
}

const LAYERS = [
  { name: "Potencial de Consumo", art: "house", date: "22/06/24", pro: true },
  { name: "Fluxo de Pessoas", art: "crowd", date: "17/02/24", pro: true, description: "Indica os lugares onde a atividade comercial é mais intensa" },
  { name: "Renda por Domicílio", art: "donut", date: "17/02/24", selected: true },
  { name: "Renda Total por Domicílio", art: "donut", date: "17/02/24" },
  { name: "População por Idade", art: "network", date: "17/02/24" },
  { name: "Moradores por Domicílio", art: "network", date: "17/02/24" },
];

const TOOLS = [
  ["tool-pin", "Marcador"], ["tool-draw", "Desenhar"], ["tool-radius", "Raio"], ["tool-clock", "Isócrona"],
  ["tool-chat", "Comentários"], ["tool-ruler", "Régua"], ["tool-camera", "Captura"],
];

@customElement("app-root")
export class AppRoot extends LitElement {
  static styles = css`
    :host {
      position: relative; display: grid; grid-template-rows: 104px minmax(0, 1fr); height: 100vh; overflow: hidden;
      font-family: Roboto, "Liberation Sans", sans-serif; font-size: 28px; color: #000;
    }
    button { font: inherit; color: inherit; border: 0; padding: 0; margin: 0; background: none; cursor: pointer; }
    svg { display: block; }
    a { color: inherit; text-decoration: none; }
    h2, p { margin: 0; font-weight: 400; }

    header { display: flex; align-items: center; justify-content: space-between; padding: 0 28px; background: #000; color: #fff; }
    .project, .account { display: flex; align-items: center; }
    .rule { width: 2px; height: 48px; margin: 0 28px; background: #d0d0d0; }
    .logo { padding-top: 4px; }
    .name { margin-right: 32px; }
    .status { margin-left: 32px; height: 48px; padding: 0 28px; border-radius: 24px; background: #667076; display: flex; align-items: center; }
    .account { gap: 59px; }
    .avatar { width: 62px; height: 62px; border-radius: 50%; background: #217ec8; display: grid; place-items: center; }

    .workspace { position: relative; display: grid; grid-template-columns: 632px minmax(0, 1fr); min-height: 0; }
    aside { display: grid; grid-template-rows: 882px 1fr; background: #fff; border-right: 2px solid #ececec; margin-right: -2px; z-index: 1; }
    .panel { padding: 32px 28px 0; }
    .panel + .panel { border-top: 8px solid #dbdbdb; }
    .panel-head { display: flex; align-items: center; height: 56px; padding-bottom: 4px; }
    .panel-head h2 { flex: 1; margin-left: 28px; font-size: 28px; }
    .panel-head .actions { display: flex; align-items: center; gap: 17px; }
    .panel + .panel .actions { padding-bottom: 24px; }
    .box { box-sizing: border-box; width: 577px; border: 2px solid #e9e9e9; display: flex; flex-direction: column; align-items: center; text-align: center; }
    .add { height: 293px; padding-top: 56px; font: inherit; justify-content: flex-start; }
    .add .title { margin-top: 24px; line-height: 40px; }
    .add .hint { width: 420px; margin-top: 4px; font-size: 24px; line-height: 24px; color: #4c4c4c; }
    .story { height: 447px; padding-top: 60px; }
    .story .title { margin-top: 24px; line-height: 40px; }
    .story .hint { width: 400px; margin-top: 4px; line-height: 28px; color: #a6a6a6; }
    .primary { width: 448px; height: 80px; background: #007d78; color: #fff; }
    .story .primary { margin-top: 56px; }

    map-canvas { height: 100%; min-height: 0; }
    .search-row { position: absolute; top: 26px; left: 0; right: 0; display: flex; justify-content: center; pointer-events: none; z-index: 1; }
    .search { box-sizing: border-box; width: 924px; height: 78px; padding: 0 16px; display: flex; align-items: center; gap: 22px; background: #fff; border: 2px solid #cfcfcf; box-shadow: 0 6px 10px rgba(0, 0, 0, 0.25); }
    .search input { flex: 1; border: 0; outline: 0; background: none; font: inherit; padding: 0; }
    .search input::placeholder { color: #8a909b; opacity: 1; }

    .tools { position: absolute; right: 33px; top: 501px; box-sizing: border-box; width: 86px; height: 550px; padding: 13px 0 11px; display: flex; flex-direction: column; justify-content: space-around; background: #fff; border: 2px solid #cacaca; box-shadow: 0 6px 10px rgba(0, 0, 0, 0.25); }
    .tools button { display: grid; place-items: center; height: 40px; }
    .tools svg { fill: #3f3f3f; }
    .help { position: absolute; right: 44px; bottom: 250px; width: 80px; height: 80px; border-radius: 50%; background: #333; color: #fff; font-size: 32px; font-weight: 700; box-shadow: 0 4px 12px rgba(0, 0, 0, 0.3); }
    .zoom { position: absolute; right: 46px; bottom: 56px; width: 58px; height: 174px; display: grid; grid-template-rows: 1fr 1fr 1fr; background: #fff; border-radius: 8px; box-shadow: 0 0 0 4px rgba(0, 0, 0, 0.1); }
    .zoom button { display: grid; place-items: center; }
    .zoom button + button { border-top: 2px solid #ddd; }
    .basemap { position: absolute; right: 146px; bottom: 56px; box-sizing: border-box; width: 120px; height: 84px; border: 8px solid #fff; border-radius: 4px; background: #f0f0ee; box-shadow: 0 6px 10px rgba(0, 0, 0, 0.4); }
    .credits { position: absolute; right: 0; bottom: 0; height: 40px; padding: 0 10px; display: flex; align-items: center; gap: 12px; background: rgba(255, 255, 255, 0.35); color: #404040; font: 24px "Liberation Sans", Arial, sans-serif; }
    .mapbox { position: absolute; left: 650px; bottom: 14px; display: flex; }
    .mapbox text { font: 700 34px Lato, "Liberation Sans", sans-serif; fill: #fff; fill-opacity: 0.7; stroke: #8c8c8c; stroke-width: 4px; paint-order: stroke; }

    .backdrop { position: absolute; inset: 0; z-index: 2; display: flex; justify-content: center; align-items: flex-start; padding-top: 22vh; background: rgba(0, 0, 0, 0.365); box-sizing: border-box; }
    .modal { position: relative; display: grid; grid-template-columns: 462px 1378px 8px; height: 952px; background: #fff; }
    .menu { display: flex; flex-direction: column; padding: 50px 28px 46px; }
    .menu h2 { margin: 0 0 30px 28px; font-size: 28px; line-height: 40px; }
    .menu ul { list-style: none; margin: 0; padding: 0 0 0 62px; display: grid; gap: 37px; }
    .menu li button { display: flex; align-items: center; gap: 17px; line-height: 40px; }
    .menu li svg { width: 30px; }
    .plan { margin-top: auto; display: flex; justify-content: space-between; align-items: center; color: #444; line-height: 40px; }
    .usage { display: flex; height: 8px; margin-top: 18px; background: #f3f3f3; }
    .usage .a { background: #d4246f; }
    .usage .b { background: #ff8a26; }
    .upgrade { align-self: flex-start; margin: 52px 0 0 56px; line-height: 40px; }
    .catalog { display: grid; grid-template-rows: minmax(0, 1fr) 114px; min-height: 0; background: #f3f3f3; }
    .cards { display: grid; grid-template-columns: repeat(3, 400px); gap: 32px; align-content: start; padding: 28px; overflow: hidden; }
    .next { height: 360px; background: #fff; }
    .confirm { display: flex; justify-content: flex-end; align-items: center; padding: 0 28px; background: #fff; }
    .track { background: #ebebeb; }
    .thumb { height: 55%; background: #9c9c9c; border-radius: 4px; }
    .close { position: absolute; left: calc(100% + 18px); top: 0; width: 48px; height: 48px; border-radius: 50%; background: #fff; display: grid; place-items: center; }
    .pulse { position: absolute; left: 946px; top: 111px; width: 192px; height: 192px; border-radius: 50%; background: rgba(0, 157, 152, 0.4); display: grid; place-items: center; pointer-events: none; }
    .pulse::after { content: ""; width: 94px; height: 94px; border-radius: 50%; background: #009f9b; }
  `;

  private header() {
    return html`
      <header>
        <div class="project">
          <a class="logo" href="#" aria-label="Mapfry">${icon("logo")}</a>
          <span class="rule"></span>
          <span class="name">Expanshopping</span>
          <button aria-label="Renomear">${icon("pencil")}</button>
          <span class="status">Rascunho</span>
        </div>
        <div class="account">
          <button aria-label="Visualizar">${icon("eye")}</button>
          <button aria-label="Publicar">${icon("rocket")}</button>
          <button class="avatar">JC</button>
        </div>
      </header>
    `;
  }

  private sidebar() {
    return html`
      <aside>
        <section class="panel">
          <div class="panel-head">
            ${icon("layers")}
            <h2>Camadas</h2>
            <div class="actions">
              <button aria-label="Ocultar camadas">${icon("eye-off")}</button>
              <button aria-label="Recolher camadas">${icon("chevron")}</button>
            </div>
          </div>
          <button class="box add">
            ${icon("add-layer")}
            <span class="title">Adicionar nova camada</span>
            <span class="hint">Suba uma base de dados ou use um modelo existente</span>
          </button>
        </section>
        <section class="panel">
          <div class="panel-head">
            ${icon("presentation")}
            <h2>Vistas</h2>
            <div class="actions"><button aria-label="Recolher vistas">${icon("chevron")}</button></div>
          </div>
          <div class="box story">
            ${icon("pin-tray")}
            <p class="title">Começe a contar sua história</p>
            <p class="hint">Clique no mapa e adicione um detalhe à sua história</p>
            <button class="primary">Criar nova vista</button>
          </div>
        </section>
      </aside>
    `;
  }

  private mapControls() {
    return html`
      <div class="search-row">
        <label class="search">${icon("search")}<input type="search" placeholder="Buscar endereço" aria-label="Buscar endereço" /></label>
      </div>
      <div class="tools">${TOOLS.map(([id, label]) => html`<button aria-label=${label}>${icon(id)}</button>`)}</div>
      <button class="help" aria-label="Ajuda">?</button>
      <div class="zoom">
        <button aria-label="Aproximar">${icon("plus")}</button>
        <button aria-label="Afastar">${icon("minus")}</button>
        <button aria-label="Norte">${icon("compass")}</button>
      </div>
      <button class="basemap" aria-label="Mapa base">
        <svg viewBox="0 0 104 68" width="104" height="68" fill="none">
          <path stroke="#fafafa" stroke-width="2" d="M0 20l20-8M30 60c4-20 0-30-10-44M60 68c4-20-10-40 0-68M20 40l70-20" />
          <path stroke="#c8cfd1" stroke-width="2" d="M72 0c0 14 8 24 12 38M84 40h16" />
          <path stroke="#dcdcda" stroke-width="3" d="M0 8h8M30 10l6-8 6 6 14 1M0 54h16M12 30l8-6M64 48h14M48 60h18M54 67h12" />
        </svg>
      </button>
      <a class="mapbox" href="https://www.mapbox.com/" aria-label="Mapbox">
        <svg viewBox="0 0 176 44" width="176" height="44">
          <circle cx="20" cy="22" r="18" fill="#fff" fill-opacity="0.7" stroke="#8c8c8c" stroke-width="3" />
          <path fill="#8c8c8c" fill-rule="evenodd" d="M10 32c-3-10 0-21 10-21a11 11 0 0 1 10 11c0 9-10 13-20 10zm12-17l-2 5-5 2 5 2 2 5 2-5 5-2-5-2z" />
          <text x="46" y="32">mapbox</text>
        </svg>
      </a>
      <div class="credits">
        <span><a href="https://www.mapbox.com/about/maps/">© Mapbox</a> <a href="https://www.openstreetmap.org/copyright">© OpenStreetMap</a></span>
        <b><a href="https://apps.mapbox.com/feedback/">Improve this map</a></b>
      </div>
    `;
  }

  private modal() {
    return html`
      <div class="backdrop">
        <div class="modal" role="dialog" aria-modal="true" aria-label="Adicionar camadas">
          <nav class="menu">
            <h2>Camadas</h2>
            <ul>
              <li><button>${icon("globe")}Dados públicos</button></li>
              <li><button>${icon("user")}Meus dados</button></li>
              <li><button>${icon("group")}Parceiros</button></li>
            </ul>
            <div class="plan"><span>Profissional Antigo</span><button aria-label="Informações do plano">${icon("info")}</button></div>
            <div class="usage"><span class="a" style="width:2.4%"></span><span class="b" style="width:3%"></span></div>
            <button class="upgrade">Aumente seus recursos</button>
          </nav>
          <div class="catalog">
            <div class="cards">
              ${LAYERS.map(
                (l) => html`<layer-card
                  .name=${l.name}
                  .art=${l.art}
                  .date=${l.date}
                  .pro=${l.pro ?? false}
                  .selected=${l.selected ?? false}
                  .description=${l.description ?? ""}
                ></layer-card>`,
              )}
              <div class="next"></div><div class="next"></div><div class="next"></div>
            </div>
            <div class="confirm"><button class="primary">Adicionar camadas</button></div>
          </div>
          <div class="track"><div class="thumb"></div></div>
          <button class="close" aria-label="Fechar">${icon("close")}</button>
          <span class="pulse"></span>
        </div>
      </div>
    `;
  }

  render() {
    return html`
      ${this.header()}
      <div class="workspace">
        ${this.sidebar()}
        <map-canvas></map-canvas>
        ${this.mapControls()}
      </div>
      ${this.modal()}
    `;
  }
}
